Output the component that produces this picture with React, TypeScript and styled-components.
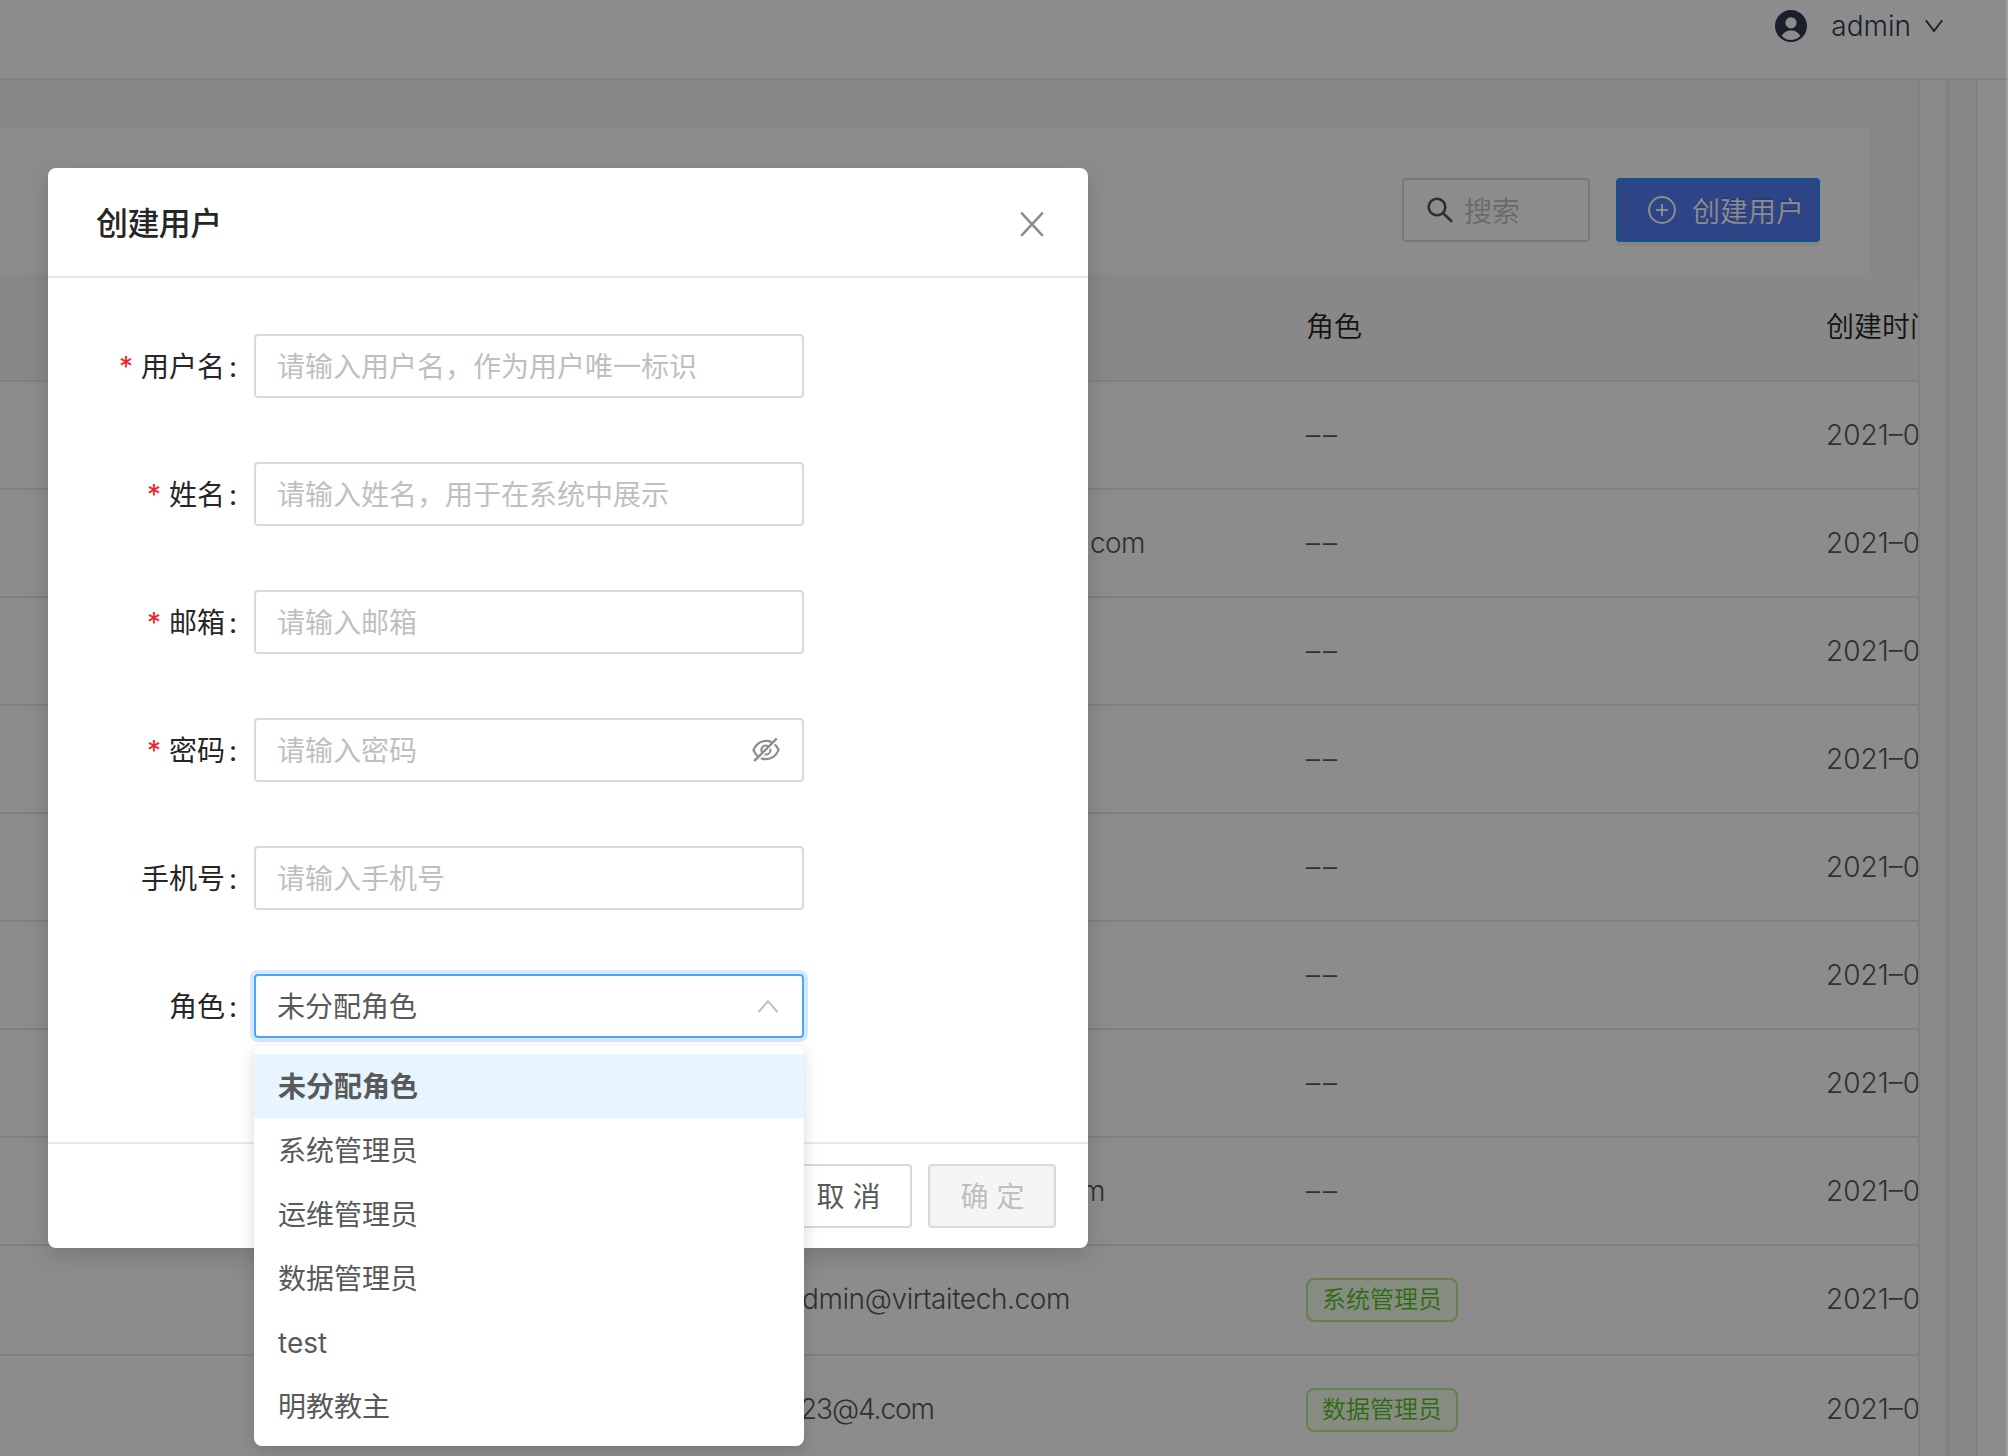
import React from 'react';
import styled, { createGlobalStyle, css } from 'styled-components';
import { AiOutlineEyeInvisible } from 'react-icons/ai';

const GlobalStyle = createGlobalStyle`
  * { box-sizing: border-box; }
  html, body { margin: 0; padding: 0; }
  body {
    font-family: Inter, "Noto Sans CJK SC", sans-serif;
    font-size: 28px;
    overflow: hidden;
    -webkit-font-smoothing: antialiased;
  }
`;

const Screen = styled.div`
  position: relative;
  display: flex;
  width: 2008px;
  height: 1456px;
  overflow: hidden;
  background: #fff;
`;

const Page = styled.div`
  flex: 1;
  min-width: 0;
  display: flex;
  flex-direction: column;
`;

const TopBar = styled.header`
  flex: none;
  height: 80px;
  padding: 0 64px 26px 0;
  display: flex;
  align-items: center;
  justify-content: flex-end;
  border-bottom: 2px solid #ececec;
  color: #2d3b50;
`;

const UserName = styled.span`
  margin: 0 13px 0 24px;
  font-weight: 300;
  line-height: 40px;
`;

const Workspace = styled.div`
  flex: 1;
  min-height: 0;
  display: flex;
`;

const Content = styled.main`
  width: 1918px;
  display: flex;
  flex-direction: column;
  padding-top: 48px;
  overflow: hidden;
  background: #f3f5f8;
`;

const Gutter = styled.div<{ $width: number; $line: number; $fill: string }>`
  width: ${p => p.$width}px;
  border-left: ${p => p.$line}px solid #ebebeb;
  background: ${p => p.$fill};
`;

const PageEdge = styled.div`
  width: 2px;
  background: #fff;
`;

const Toolbar = styled.div`
  flex: none;
  width: 1870px;
  height: 146px;
  padding: 18px 50px 0;
  display: flex;
  align-items: center;
  justify-content: flex-end;
  gap: 26px;
  background: #fff;
`;

const SearchBox = styled.div`
  width: 188px;
  height: 64px;
  padding-left: 22px;
  display: flex;
  align-items: center;
  gap: 8px;
  border: 2px solid #d9d9d9;
  border-radius: 4px;
  color: #bfbfbf;
  font-weight: 330;
`;

const CreateButton = styled.button`
  width: 204px;
  height: 64px;
  padding: 0 0 0 30px;
  display: flex;
  align-items: center;
  gap: 16px;
  border: 2px solid #2695ff;
  border-radius: 4px;
  background: #527df5;
  box-shadow: 0 4px 0 rgba(0, 0, 0, 0.043);
  color: #fff;
  font: inherit;
  font-weight: 330;
  text-shadow: 0 -2px 0 rgba(0, 0, 0, 0.12);
`;

const Table = styled.div`
  flex: none;
  width: 2314px;
  background: #fff;
`;

const TableRow = styled.div<{ $head?: boolean; $tall?: boolean }>`
  height: ${p => (p.$tall ? 110 : 108)}px;
  padding: 0 0 ${p => (p.$tall ? 2 : 0)}px 754px;
  display: grid;
  grid-template-columns: 520px 520px 520px;
  align-items: center;
  border-bottom: 2px solid #e8e8e8;
  color: #595959;
  font-weight: 330;
  ${p => p.$head && css`
    background: #f8f8f8;
    color: #262626;
  `}
`;

const Cell = styled.div<{ $indent?: number; $tracking?: number }>`
  padding-left: ${p => p.$indent ?? 32}px;
  letter-spacing: ${p => p.$tracking ?? -0.3}px;
  line-height: 42px;
  white-space: nowrap;
`;

const HeadCell = styled(Cell)`
  letter-spacing: 0;
  font-weight: 350;
`;

const Tag = styled.span`
  display: block;
  width: 152px;
  height: 44px;
  margin-top: 2px;
  border: 2px solid #b7eb8f;
  border-radius: 8px;
  background: #f6ffed;
  color: #52c41a;
  font-size: 24px;
  font-weight: 350;
  letter-spacing: 0;
  line-height: 40px;
  text-align: center;
`;

const Mask = styled.div`
  position: absolute;
  inset: 0 2px 0 0;
  background: rgba(0, 0, 0, 0.45);
`;

const EdgeMask = styled.div`
  position: absolute;
  inset: 0 0 0 auto;
  width: 2px;
  background: rgba(0, 0, 0, 0.38);
`;

const Dialog = styled.section`
  position: absolute;
  top: 168px;
  left: 48px;
  width: 1040px;
  height: 1080px;
  display: flex;
  flex-direction: column;
  border-radius: 8px;
  background: #fff;
  box-shadow: 0 8px 24px rgba(0, 0, 0, 0.15);
`;

const DialogHeader = styled.div`
  height: 110px;
  padding: 3px 42px 0 48px;
  display: flex;
  align-items: center;
  justify-content: space-between;
  border-bottom: 2px solid #e8e8e8;
`;

const DialogTitle = styled.h1`
  margin: 0;
  color: #262626;
  font-size: 32px;
  font-weight: 550;
  line-height: 44px;
  letter-spacing: -0.6px;
`;

const FormBody = styled.form`
  flex: 1;
  padding-top: 56px;
  display: flex;
  flex-direction: column;
  gap: 64px;
`;

const FormRow = styled.div`
  height: 64px;
  display: grid;
  grid-template-columns: 206px 550px;
  align-items: center;
`;

const Label = styled.label`
  padding: 2px 14px 0 0;
  display: flex;
  align-items: center;
  justify-content: flex-end;
  color: #262626;
  line-height: 42px;
  white-space: nowrap;
`;

const Required = styled.span`
  margin-right: 8px;
  color: #f5222d;
`;

const Colon = styled.span`
  width: 15px;
  padding-left: 1px;
  text-align: center;
`;

const Field = styled.div<{ $focused?: boolean }>`
  position: relative;
  height: 64px;
  padding: 0 20px 0 21px;
  display: flex;
  align-items: center;
  justify-content: space-between;
  border: 2px solid #d9d9d9;
  border-radius: 4px;
  color: #bfbfbf;
  ${p => p.$focused && css`
    border-color: #49a6fa;
    box-shadow: 0 0 0 4px rgba(24, 125, 255, 0.18);
    color: #595959;
  `}
`;

const FieldText = styled.span`
  padding-top: 2px;
  line-height: 42px;
`;

const HiddenEye = styled(AiOutlineEyeInvisible)`
  flex: none;
  color: #8c8c8c;
`;

const Menu = styled.ul`
  position: absolute;
  z-index: 2;
  top: 70px;
  left: -2px;
  width: 550px;
  margin: 0;
  padding: 8px 0;
  list-style: none;
  border-radius: 8px;
  background: #fff;
  box-shadow: 0 4px 16px rgba(0, 0, 0, 0.15);
`;

const Option = styled.li<{ $selected?: boolean }>`
  height: 64px;
  padding-left: 24px;
  background: ${p => (p.$selected ? '#e6f5ff' : 'transparent')};
  color: #595959;
  font-weight: ${p => (p.$selected ? 600 : 400)};
  line-height: 66px;
`;

const DialogFooter = styled.div`
  height: 106px;
  padding: 20px 32px;
  display: flex;
  justify-content: flex-end;
  gap: 16px;
  border-top: 2px solid #e8e8e8;
`;

const Button = styled.button<{ $disabled?: boolean }>`
  width: 128px;
  height: 64px;
  padding: 0 0 2px 9px;
  border: 2px solid #d9d9d9;
  border-radius: 4px;
  background: ${p => (p.$disabled ? '#f5f5f5' : '#fff')};
  box-shadow: ${p => (p.$disabled ? 'none' : '0 4px 0 rgba(0, 0, 0, 0.016)')};
  color: ${p => (p.$disabled ? '#bfbfbf' : '#595959')};
  font: inherit;
  letter-spacing: 8px;
`;

const UserIcon = () => (
  <svg width="32" height="32" viewBox="0 0 32 32">
    <path
      fill="currentColor"
      fillRule="evenodd"
      d="M16 0a16 16 0 1 1 0 32a16 16 0 0 1 0-32zM16 7.2a5.6 5.6 0 1 0 0 11.2a5.6 5.6 0 0 0 0-11.2zM6.8 26C8.4 22.6 12 20.600 16 20.600s7.600 2 9.200 5.400C22.800 28.600 19.600 30 16 30s-6.800-1.400-9.200-4z"
    />
  </svg>
);

const DownIcon = () => (
  <svg width="20" height="14" viewBox="0 0 20 14">
    <path d="M1.800 1.200L10 12L18.200 1.200" fill="none" stroke="currentColor" strokeWidth="1.900" />
  </svg>
);

const UpIcon = () => (
  <svg width="28" height="24" viewBox="0 0 28 24">
    <path d="M4.500 18.200L14 7.200L23.500 18.200" fill="none" stroke="#bfbfbf" strokeWidth="2" />
  </svg>
);

const SearchIcon = () => (
  <svg width="30" height="28" viewBox="0 0 30 28">
    <g fill="none" stroke="#555" strokeWidth="2.600">
      <circle cx="11" cy="11" r="8.300" />
      <path d="M17 17L26 25.800" />
    </g>
  </svg>
);

const PlusIcon = () => (
  <svg width="28" height="28" viewBox="0 0 28 28">
    <g fill="none" stroke="currentColor" strokeWidth="2">
      <circle cx="14" cy="14" r="12.900" />
      <path d="M14 8v12M8 14h12" />
    </g>
  </svg>
);

const CloseIcon = () => (
  <svg width="28" height="28" viewBox="0 0 28 28">
    <path d="M3.200 2.600L24.800 25.800M24.800 2.600L3.200 25.800" fill="none" stroke="#8c8c8c" strokeWidth="2.500" />
  </svg>
);

type User = { email?: string; indent?: number; tracking?: number; role?: string };

const users: User[] = [
  {},
  { email: 'com', indent: 336, tracking: -0.6 },
  {},
  {},
  {},
  {},
  {},
  { email: 'm', indent: 327 },
  { email: 'dmin@virtaitech.com', indent: 48, tracking: -0.4, role: '系统管理员' },
  { email: '23@4.com', indent: 46, tracking: -1.1, role: '数据管理员' },
];

const fields = [
  { label: '用户名', hint: '请输入用户名，作为用户唯一标识', required: true },
  { label: '姓名', hint: '请输入姓名，用于在系统中展示', required: true },
  { label: '邮箱', hint: '请输入邮箱', required: true },
  { label: '密码', hint: '请输入密码', required: true, secret: true },
  { label: '手机号', hint: '请输入手机号' },
];

const roles = ['未分配角色', '系统管理员', '运维管理员', '数据管理员', 'test', '明教教主'];

export default function App() {
  return (
    <Screen lang="zh-CN">
      <GlobalStyle />
      <Page>
        <TopBar>
          <UserIcon />
          <UserName>admin</UserName>
          <DownIcon />
        </TopBar>
        <Workspace>
          <Content>
            <Toolbar>
              <SearchBox>
                <SearchIcon />
                <span>搜索</span>
              </SearchBox>
              <CreateButton type="button">
                <PlusIcon />
                创建用户
              </CreateButton>
            </Toolbar>
            <Table>
              <TableRow $head>
                <HeadCell />
                <HeadCell>角色</HeadCell>
                <HeadCell>创建时间</HeadCell>
              </TableRow>
              {users.map((user, i) => (
                <TableRow key={i} $tall={!!user.role}>
                  <Cell $indent={user.indent} $tracking={user.tracking}>{user.email}</Cell>
                  <Cell $tracking={3}>{user.role ? <Tag>{user.role}</Tag> : '––'}</Cell>
                  <Cell $tracking={0}>2021–0</Cell>
                </TableRow>
              ))}
            </Table>
          </Content>
          <Gutter $width={28} $line={2} $fill="#fcfcfc" />
          <Gutter $width={30} $line={4} $fill="#f8f8f8" />
          <Gutter $width={30} $line={2} $fill="#ffffff" />
          <PageEdge />
        </Workspace>
      </Page>
      <Mask />
      <EdgeMask />
      <Dialog>
        <DialogHeader>
          <DialogTitle>创建用户</DialogTitle>
          <CloseIcon />
        </DialogHeader>
        <FormBody>
          {fields.map(field => (
            <FormRow key={field.label}>
              <Label>
                {field.required && <Required>*</Required>}
                {field.label}
                <Colon>:</Colon>
              </Label>
              <Field>
                <FieldText>{field.hint}</FieldText>
                {field.secret && <HiddenEye size={32} />}
              </Field>
            </FormRow>
          ))}
          <FormRow>
            <Label>
              角色
              <Colon>:</Colon>
            </Label>
            <Field $focused>
              <FieldText>未分配角色</FieldText>
              <UpIcon />
              <Menu>
                {roles.map((role, i) => (
                  <Option key={role} $selected={i === 0}>{role}</Option>
                ))}
              </Menu>
            </Field>
          </FormRow>
        </FormBody>
        <DialogFooter>
          <Button type="button">取消</Button>
          <Button type="button" $disabled>确定</Button>
        </DialogFooter>
      </Dialog>
    </Screen>
  );
}
